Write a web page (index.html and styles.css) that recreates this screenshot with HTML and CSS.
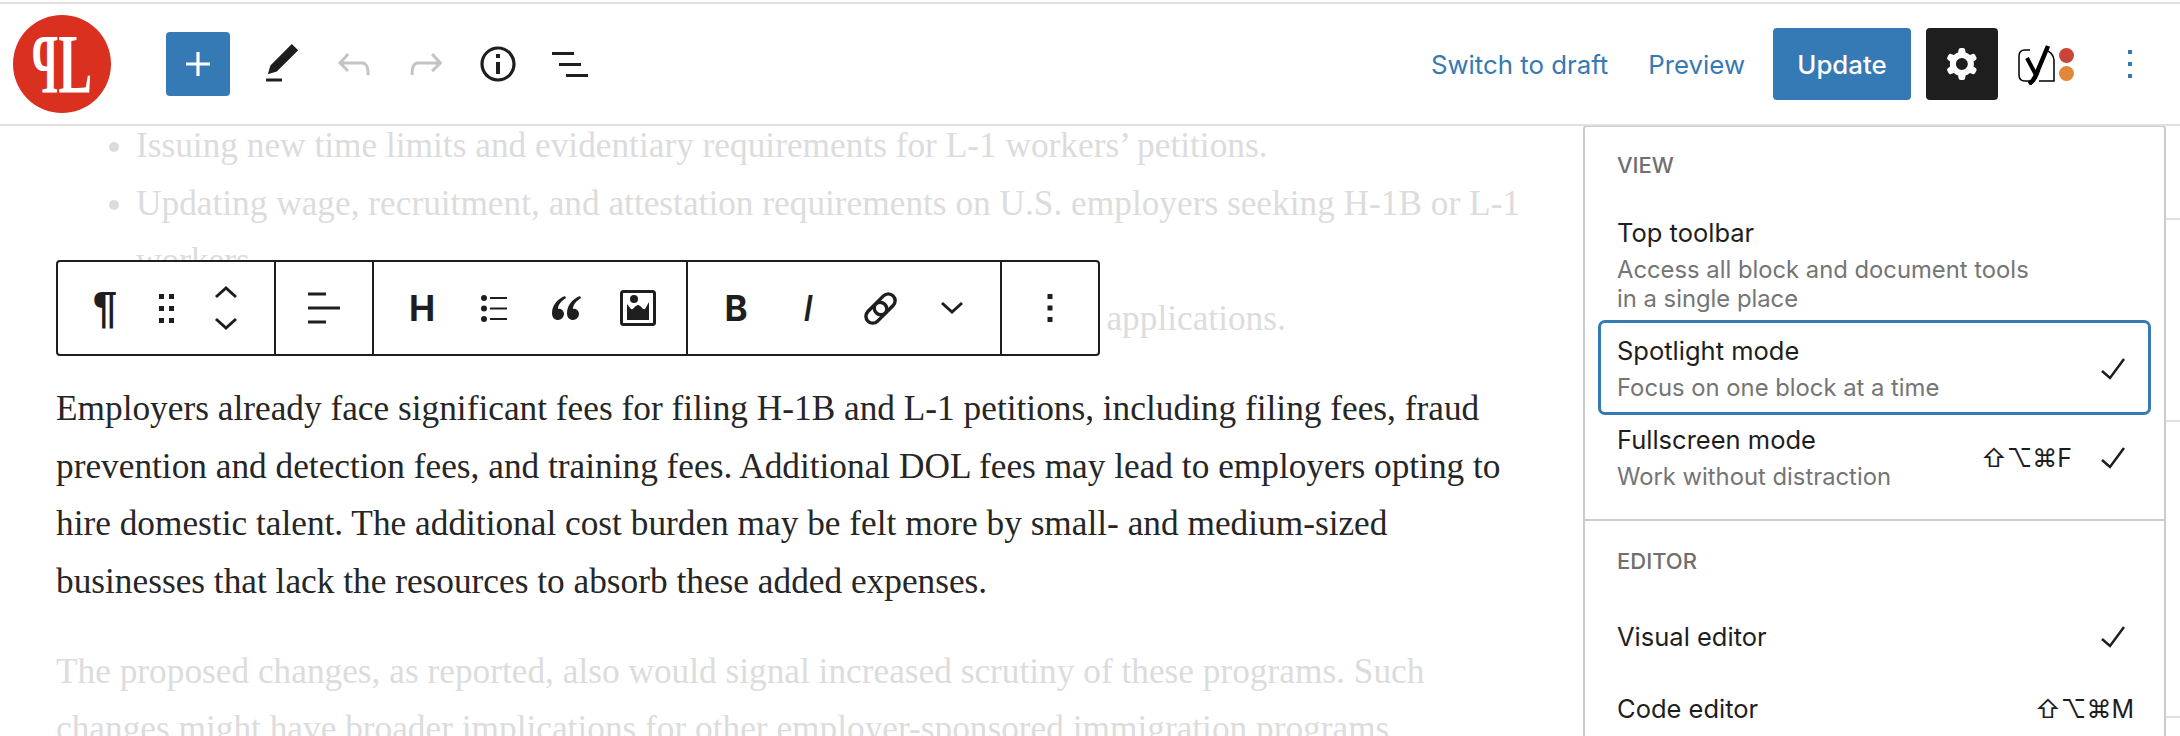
FILE: index.html
```html
<!DOCTYPE html>
<html lang="en">
<head>
    <meta charset="UTF-8">
    <title>Edit post</title>
    <link rel="stylesheet" href="styles.css">
</head>
<body>
    <div class="page">
        <header class="header">
            <div class="header-left">
                <div class="logo"><span class="logo-p">P</span><span class="logo-l">L</span></div>
                <button class="add-button">
                    <svg width="48" height="48" viewBox="0 0 24 24"><path d="M18 11.2h-5.2V6h-1.6v5.2H6v1.6h5.2V18h1.6v-5.2H18z"/></svg>
                </button>
                <button class="icon-button">
                    <svg width="48" height="48" viewBox="0 0 24 24"><path d="M20.1 5.1L16.9 2 6.2 12.7l-1.3 4.4 4.5-1.3L20.1 5.1zM4 20.8h8v-1.5H4v1.5z"/></svg>
                </button>
                <button class="icon-button disabled">
                    <svg width="48" height="48" viewBox="0 0 24 24"><path d="M18.3 11.7c-.6-.6-1.4-.9-2.3-.9H6.7l2.9-3.3-1.1-1-4.5 5L8.5 16l1-1-2.7-2.7H16c.5 0 .9.2 1.3.5 1 1 1 3.4 1 4.5v.3h1.5v-.2c0-1.5 0-4.3-1.5-5.7z"/></svg>
                </button>
                <button class="icon-button disabled">
                    <svg width="48" height="48" viewBox="0 0 24 24"><path d="M15.6 6.5l-1.1 1 2.9 3.3H8c-.9 0-1.7.3-2.3.9-1.4 1.5-1.4 4.2-1.4 5.6v.2h1.5v-.3c0-1.1 0-3.5 1-4.5.3-.3.7-.5 1.3-.5h9.2L14.5 15l1.1 1.1 4.6-4.6-4.6-5z"/></svg>
                </button>
                <button class="icon-button">
                    <svg width="48" height="48" viewBox="0 0 24 24"><path d="M12 3.2c-4.8 0-8.8 3.9-8.8 8.8 0 4.8 3.9 8.8 8.8 8.8 4.8 0 8.8-3.9 8.8-8.8 0-4.8-4-8.8-8.8-8.8zm0 16c-4 0-7.2-3.3-7.2-7.2C4.8 8 8 4.8 12 4.8s7.2 3.3 7.2 7.2c0 4-3.2 7.2-7.2 7.2zM11 17h2v-6h-2v6zm0-8h2V7h-2v2z"/></svg>
                </button>
                <button class="icon-button">
                    <svg width="48" height="48" viewBox="0 0 24 24"><path d="M3 6h11v1.5H3V6zm3.5 5.5h11V13h-11v-1.5zM21 17H10v1.5h11V17z"/></svg>
                </button>
            </div>
            <div class="header-right">
                <a href="#" class="text-link">Switch to draft</a>
                <a href="#" class="text-link preview-link">Preview</a>
                <button class="update-button">Update</button>
                <button class="settings-button">
                    <svg width="48" height="48" viewBox="0 0 24 24"><path fill-rule="evenodd" clip-rule="evenodd" d="M10.289 4.836A1 1 0 0111.275 4h1.306a1 1 0 01.987.836l.244 1.466c.787.26 1.503.679 2.108 1.218l1.393-.522a1 1 0 011.216.437l.653 1.13a1 1 0 01-.23 1.273l-1.148.944a6.025 6.025 0 010 2.435l1.149.946a1 1 0 01.23 1.272l-.653 1.13a1 1 0 01-1.216.437l-1.394-.522c-.605.54-1.32.958-2.108 1.218l-.244 1.466a1 1 0 01-.987.836h-1.306a1 1 0 01-.986-.836l-.244-1.466a5.995 5.995 0 01-2.108-1.218l-1.394.522a1 1 0 01-1.217-.436l-.653-1.131a1 1 0 01.23-1.272l1.149-.946a6.026 6.026 0 010-2.435l-1.148-.944a1 1 0 01-.23-1.272l.653-1.131a1 1 0 011.217-.437l1.393.522a5.994 5.994 0 012.108-1.218l.244-1.466zM14.929 12a3 3 0 11-6 0 3 3 0 016 0z"/></svg>
                </button>
                <div class="yoast">
                    <svg class="line-icon" width="37" height="41" viewBox="0 0 37 41" stroke="#000">
                        <path stroke-width="1.500" d="M12 6H7Q1 6 1 12V31Q1 37 7 37H16M27 6Q35 8 36 16V37H21"/>
                        <path stroke-width="4.500" d="M30 2L20 26Q17 36 11 40"/>
                        <path stroke-width="4" d="M9 14L18 31"/>
                    </svg>
                    <div class="yoast-dots"><span class="dot red"></span><span class="dot orange"></span></div>
                </div>
                <button class="icon-button more-button">
                    <svg width="48" height="48" viewBox="0 0 24 24"><path d="M13 19h-2v-2h2v2zm0-6h-2v-2h2v2zm0-6h-2V5h2v2z"/></svg>
                </button>
            </div>
        </header>

        <main class="main">
            <article class="post">
                <ul class="faded">
                    <li>Issuing new time limits and evidentiary requirements for L-1 workers’ petitions.</li>
                    <li>Updating wage, recruitment, and attestation requirements on U.S. employers seeking H-1B or L-1<br>workers.</li>
                    <li>Adding new site visits and fraud checks for H-1B and L-1 employer applications.</li>
                </ul>
                <p>Employers already face significant fees for filing H-1B and L-1 petitions, including filing fees, fraud<br>prevention and detection fees, and training fees. Additional DOL fees may lead to employers opting to<br>hire domestic talent. The additional cost burden may be felt more by small- and medium-sized<br>businesses that lack the resources to absorb these added expenses.</p>
                <p class="faded">The proposed changes, as reported, also would signal increased scrutiny of these programs. Such<br>changes might have broader implications for other employer-sponsored immigration programs.</p>
            </article>

            <aside class="sidebar">
                <div class="sidebar-row first"></div>
                <div class="sidebar-row second"></div>
                <div class="sidebar-row third"></div>
            </aside>

            <div class="block-toolbar">
                <div class="tool-group first-group">
                    <button class="tool paragraph-tool">¶</button>
                    <button class="tool drag-tool">
                        <svg width="48" height="48" viewBox="0 0 48 48"><path d="M17 10h5v5h-5zM27 10h5v5h-5zM17 22h5v5h-5zM27 22h5v5h-5zM17 34h5v5h-5zM27 34h5v5h-5z"/></svg>
                    </button>
                    <button class="tool mover-tool">
                        <svg class="line-icon" width="24" height="48" viewBox="0 0 24 48" stroke="#1e1e1e" stroke-width="3"><path d="M2 13L12 4L22 13M2 35L12 44L22 35"/></svg>
                    </button>
                </div>
                <div class="tool-group">
                    <button class="tool">
                        <svg width="48" height="48" viewBox="0 0 48 48"><path d="M8 8.500h18v3H8zM8 22.500h32v3H8zM8 36.500h18v3H8z"/></svg>
                    </button>
                </div>
                <div class="tool-group">
                    <button class="tool text-tool">H</button>
                    <button class="tool">
                        <svg width="48" height="48" viewBox="0 0 48 48"><circle cx="14" cy="14" r="3"/><circle cx="14" cy="24.500" r="3"/><circle cx="14" cy="35" r="3"/><path d="M20 13h17v2H20zM20 23.500h17v2H20zM20 34h17v2H20z"/></svg>
                    </button>
                    <button class="tool">
                        <svg width="30" height="24" viewBox="0 0 30 24"><path d="M14 0C6 3 1 10 1 17C1 22 4 24 7 24C10 24 13 21 13 18C13 15 10 12 7 13C7 9 10 5 15 2Z"/><path d="M29 0C21 3 16 10 16 17C16 22 19 24 22 24C25 24 28 21 28 18C28 15 25 12 22 13C22 9 25 5 30 2Z"/></svg>
                    </button>
                    <button class="tool">
                        <svg width="36" height="36" viewBox="0 0 36 36"><rect x="1.500" y="1.500" width="33" height="33" rx="2" fill="none" stroke="#1e1e1e" stroke-width="3"/><circle cx="14" cy="9" r="4"/><path d="M7 14L11 19C14 20 15 15 18 15C21 15 22 20 25 19L29 12V30H7Z"/></svg>
                    </button>
                </div>
                <div class="tool-group">
                    <button class="tool text-tool">B</button>
                    <button class="tool text-tool italic-tool">I</button>
                    <button class="tool">
                        <svg class="line-icon" width="41" height="41" viewBox="0 0 36 36" stroke="#1e1e1e" stroke-width="3"><rect x="16" y="4" width="12" height="21" rx="6" transform="rotate(45 22 14)"/><rect x="8" y="11" width="12" height="21" rx="6" transform="rotate(45 14 22)"/></svg>
                    </button>
                    <button class="tool">
                        <svg class="line-icon" width="24" height="14" viewBox="0 0 24 14" stroke="#1e1e1e" stroke-width="3"><path d="M2 2L12 11L22 2"/></svg>
                    </button>
                </div>
                <div class="tool-group">
                    <button class="tool">
                        <svg width="48" height="48" viewBox="0 0 24 24"><path d="M13.250 19h-2.500v-2.500h2.500v2.500zm0-5.750h-2.500v-2.500h2.500v2.500zm0-5.750h-2.500V5h2.500v2.500z"/></svg>
                    </button>
                </div>
            </div>

            <div class="options-menu">
                <div class="menu-group view-group">
                    <div class="menu-label">VIEW</div>
                    <div class="menu-row">
                        <div class="row-text">
                            <div class="row-title">Top toolbar</div>
                            <div class="row-desc">Access all block and document tools<br>in a single place</div>
                        </div>
                    </div>
                    <div class="menu-row focused">
                        <div class="row-text">
                            <div class="row-title">Spotlight mode</div>
                            <div class="row-desc">Focus on one block at a time</div>
                        </div>
                        <svg class="line-icon" width="40" height="24" viewBox="0 0 40 24" stroke="#1e1e1e" stroke-width="2.500"><path d="M10 14L18 21L32 2"/></svg>
                    </div>
                    <div class="menu-row">
                        <div class="row-text">
                            <div class="row-title">Fullscreen mode</div>
                            <div class="row-desc">Work without distraction</div>
                        </div>
                        <span class="shortcut">⇧⌥⌘F</span>
                        <svg class="line-icon" width="40" height="24" viewBox="0 0 40 24" stroke="#1e1e1e" stroke-width="2.500"><path d="M10 14L18 21L32 2"/></svg>
                    </div>
                </div>
                <div class="menu-group editor-group">
                    <div class="menu-label">EDITOR</div>
                    <div class="menu-row short">
                        <div class="row-title">Visual editor</div>
                        <svg class="line-icon" width="40" height="24" viewBox="0 0 40 24" stroke="#1e1e1e" stroke-width="2.500"><path d="M10 14L18 21L32 2"/></svg>
                    </div>
                    <div class="menu-row short">
                        <div class="row-title">Code editor</div>
                        <span class="shortcut last">⇧⌥⌘M</span>
                    </div>
                </div>
            </div>
        </main>
    </div>
</body>
</html>
```

FILE: styles.css
```css
* {
    box-sizing: border-box;
}

html, body {
    margin: 0;
    height: 100%;
    overflow: hidden;
    background: #fff;
}

body {
    font-family: Inter, "DejaVu Sans", sans-serif;
    color: #1e1e1e;
}

button {
    font-family: inherit;
    border: none;
    background: none;
    padding: 0;
    display: flex;
    align-items: center;
    justify-content: center;
}

svg {
    display: block;
    fill: currentColor;
}

svg.line-icon {
    fill: none;
}

.page {
    height: 736px;
    display: flex;
    flex-direction: column;
    padding-top: 2px;
}

/* top bar */
.header {
    height: 124px;
    flex-shrink: 0;
    display: flex;
    justify-content: space-between;
    align-items: center;
    border-top: 2px solid #e0e0e0;
    border-bottom: 2px solid #e0e0e0;
}

.header-left {
    display: flex;
    align-items: center;
    padding-left: 13px;
}

.header-right {
    display: flex;
    align-items: center;
    padding-right: 14px;
}

.logo {
    width: 98px;
    height: 98px;
    border-radius: 50%;
    background: #d9301f;
    color: #fff;
    margin-right: 55px;
    display: flex;
    align-items: center;
    justify-content: center;
    font-family: "Liberation Serif", serif;
    font-size: 85px;
    font-weight: bold;
    line-height: 1;
    overflow: hidden;
}

.logo-p {
    margin: 0 -13px;
    transform: scaleX(-0.5);
}

.logo-l {
    margin: 0 -11px;
    transform: scaleX(0.6);
}

.add-button {
    width: 64px;
    height: 64px;
    background: #3579b5;
    color: #fff;
    border-radius: 4px;
    margin-right: 16px;
}

.icon-button {
    width: 72px;
    height: 72px;
    color: #1e1e1e;
}

.icon-button.disabled {
    color: #c4c4c4;
}

.text-link {
    color: #3579b5;
    font-size: 25.800px;
    text-decoration: none;
}

.preview-link {
    margin-left: 40px;
    margin-right: 28px;
}

.update-button {
    width: 138px;
    height: 72px;
    background: #3579b5;
    color: #fff;
    font-size: 25.800px;
    font-weight: 500;
    border-radius: 4px;
}

.settings-button {
    width: 72px;
    height: 72px;
    margin-left: 15px;
    background: #1e1e1e;
    color: #fff;
    border-radius: 4px;
}

.yoast {
    display: flex;
    align-items: center;
    gap: 4px;
    margin-left: 20px;
    margin-right: 20px;
}

.yoast-dots {
    display: flex;
    flex-direction: column;
    gap: 3px;
}

.dot {
    display: block;
    width: 15px;
    height: 15px;
    border-radius: 50%;
}

.dot.red {
    background: #cb4339;
}

.dot.orange {
    background: #e2873a;
}

.more-button {
    color: #3579b5;
}

/* editor content */
.main {
    position: relative;
    flex: 1;
    display: flex;
    overflow: hidden;
}

.post {
    flex: 1;
    margin-top: -9px;
    padding-left: 56px;
    font-family: "Liberation Serif", serif;
    font-size: 35.300px;
    line-height: 57.700px;
    color: #262626;
    white-space: nowrap;
}

.post ul {
    margin: 0 0 32px;
    padding-left: 80px;
}

.post p {
    margin: 0 0 32px;
}

.post .faded {
    color: #dcdcdc;
}

.sidebar {
    width: 14px;
}

.sidebar-row {
    border-bottom: 2px solid #e0e0e0;
}

.sidebar-row.first {
    height: 94px;
}

.sidebar-row.second {
    height: 202px;
}

.sidebar-row.third {
    height: 296px;
}

/* block toolbar */
.block-toolbar {
    position: absolute;
    top: 134px;
    left: 56px;
    height: 96px;
    display: flex;
    background: #fff;
    border: 2px solid #1e1e1e;
    border-radius: 4px;
}

.tool-group {
    display: flex;
    align-items: center;
    padding: 0 12px;
    border-left: 2px solid #1e1e1e;
}

.tool-group.first-group {
    padding: 0 13px 0 11px;
    border-left: none;
}

.tool {
    width: 72px;
    height: 72px;
    color: #1e1e1e;
}

.drag-tool {
    width: 50px;
}

.mover-tool {
    width: 70px;
}

.paragraph-tool {
    font-family: "Liberation Sans", sans-serif;
    font-size: 44px;
    font-weight: bold;
}

.text-tool {
    font-size: 35px;
    font-weight: 700;
}

.italic-tool {
    font-weight: 500;
    font-style: italic;
}

/* options dropdown */
.options-menu {
    position: absolute;
    top: -1px;
    right: 14px;
    bottom: -20px;
    width: 583px;
    background: #fff;
    border: 2px solid #ccc;
    border-radius: 4px;
}

.menu-group {
    padding: 0 16px;
}

.view-group {
    padding-bottom: 18px;
    border-bottom: 2px solid #ccc;
}

.editor-group {
    padding-top: 2px;
}

.menu-label {
    height: 78px;
    padding-top: 22px;
    padding-left: 16px;
    font-size: 22px;
    font-weight: 500;
    line-height: 32px;
    color: #6f6f6f;
}

.menu-row {
    display: flex;
    align-items: center;
    padding: 12px 16px 10px;
}

.menu-row.focused {
    outline: 3px solid #3579b5;
    border-radius: 4px;
}

.menu-row.short {
    height: 72px;
    padding: 0 16px;
    justify-content: space-between;
}

.row-text {
    flex: 1;
}

.row-title {
    font-size: 25.500px;
    line-height: 32px;
    color: #1e1e1e;
}

.row-desc {
    margin-top: 6px;
    font-size: 23.800px;
    line-height: 29px;
    color: #757575;
}

.shortcut {
    margin-right: 20px;
    font-size: 25px;
    line-height: 32px;
}

.shortcut.last {
    margin-right: -2px;
}
```
